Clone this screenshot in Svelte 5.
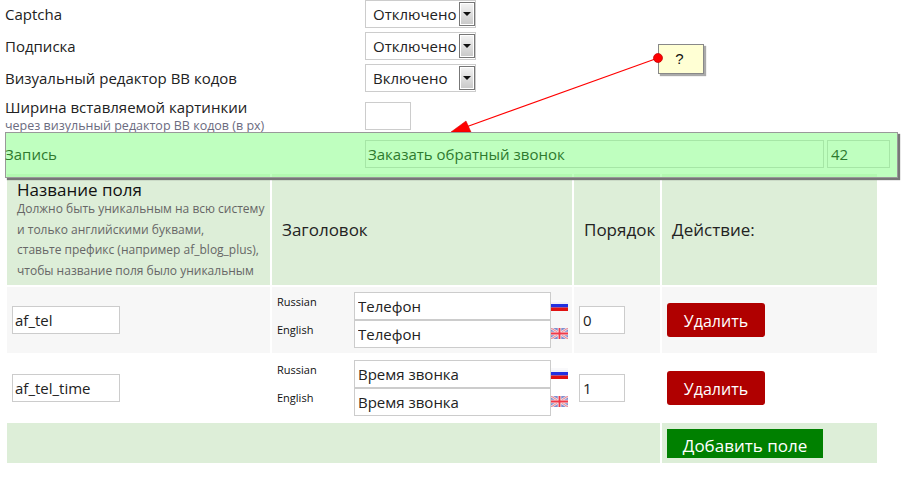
<script>
	const settings = [
		{ label: 'Captcha', value: 'Отключено' },
		{ label: 'Подписка', value: 'Отключено' },
		{ label: 'Визуальный редактор ВВ кодов', value: 'Включено' }
	];
	const fields = [
		{ name: 'af_tel', title: 'Телефон', order: 0 },
		{ name: 'af_tel_time', title: 'Время звонка', order: 1 }
	];
	const hints = [
		'Должно быть уникальным на всю систему',
		'и только английскими буквами,',
		'ставьте префикс (например af_blog_plus),',
		'чтобы название поля было уникальным'
	];
</script>

<div class="page">
	<!-- Settings -->
	<div class="settings">
		{#each settings as s}
			<div class="setting">
				<span class="setting-label">{s.label}</span>
				<div class="select-wrap">
					<select class="select"><option>{s.value}</option></select>
					<span class="select-btn"><i></i></span>
				</div>
			</div>
		{/each}
		<div class="setting setting-width">
			<div class="setting-label">
				<div>Ширина вставляемой картинкии</div>
				<small>через визульный редактор ВВ кодов (в px)</small>
			</div>
			<input class="input width-input" />
		</div>
	</div>

	<!-- Fields -->
	<table class="fields">
		<thead>
			<tr>
				<th class="col-name">
					<div class="name-title">Название поля</div>
					{#each hints as h}
						<div class="hint">{h}</div>
					{/each}
				</th>
				<th class="col-title">Заголовок</th>
				<th class="col-order">Порядок</th>
				<th class="col-action">Действие:</th>
			</tr>
		</thead>
		<tbody>
			{#each fields as f, i}
				<tr class:odd={i % 2 === 0}>
					<td class="cell-name"><input class="input name-input" value={f.name} /></td>
					<td class="cell-title">
						<div class="lang-row">
							<span class="lang">Russian</span>
							<input class="input title-input" value={f.title} />
							<svg class="flag" viewBox="0 0 17 11" width="17" height="11">
								<rect width="17" height="4" fill="#f0f0f6" />
								<rect y="4" width="17" height="3.5" fill="#2230e0" />
								<rect y="7.5" width="17" height="3.5" fill="#e01010" />
								<rect width="17" height="2" fill="#fff" opacity="0.6" />
							</svg>
						</div>
						<div class="lang-row">
							<span class="lang">English</span>
							<input class="input title-input" value={f.title} />
							<svg class="flag" viewBox="0 0 17 11" width="17" height="11">
								<rect width="17" height="11" fill="#7f8fd0" />
								<path d="M0 0L17 11M17 0L0 11" stroke="#f0dfe4" stroke-width="2.4" />
								<path d="M0 0L17 11M17 0L0 11" stroke="#ec6a78" stroke-width="0.8" />
								<path d="M8.5 0V11M0 5.5H17" stroke="#f4e8e8" stroke-width="3.6" />
								<path d="M8.5 0V11M0 5.5H17" stroke="#f03a4a" stroke-width="1.8" />
							</svg>
						</div>
					</td>
					<td class="cell-order"><input class="input order-input" value={f.order} /></td>
					<td class="cell-action"><button class="btn btn-delete">Удалить</button></td>
				</tr>
			{/each}
			<tr class="foot">
				<td colspan="3"></td>
				<td class="cell-add"><button class="btn btn-add">Добавить поле</button></td>
			</tr>
		</tbody>
	</table>

	<!-- Annotation -->
	<div class="note">?</div>
	<svg class="arrow" width="908" height="140" viewBox="0 0 908 140">
		<line x1="658" y1="58" x2="466" y2="127" stroke="#f00" stroke-width="1.1" />
		<path d="M451 132L466 121L471 132Z" fill="#f00" stroke="#c00" stroke-width="0.5" />
		<circle cx="658" cy="58" r="4.5" fill="#f00" stroke="#b00" stroke-width="0.7" />
	</svg>

	<!-- Floating record bar -->
	<div class="record-bar">
		<span class="record-label">Запись</span>
		<input class="record-input record-title" value="Заказать обратный звонок" />
		<input class="record-input record-id" value="42" />
	</div>
</div>

<style>
	:global(body) {
		margin: 0;
		background: #fff;
	}

	.page {
		position: relative;
		display: flow-root;
		width: 908px;
		height: 477px;
		overflow: hidden;
		font-family: 'Open Sans', sans-serif;
		font-size: 15px;
		color: #222;
	}

	.settings {
		display: flow-root;
		padding-left: 5px;
		height: 172px;
	}
	.setting {
		display: grid;
		grid-template-columns: 360px auto;
		align-items: center;
		height: 32px;
	}
	.setting:first-child {
		margin-top: -2px;
	}
	.setting-width {
		height: 38px;
		margin-top: 3px;
	}
	.setting-width .setting-label {
		align-self: start;
	}
	.setting-width .setting-label > div {
		line-height: 20px;
	}
	.setting-width small {
		display: block;
		margin-top: 2px;
		font-size: 12.5px;
		line-height: 14px;
		white-space: nowrap;
		color: #6b6b80;
	}

	.select-wrap {
		position: relative;
		width: 111px;
		height: 28px;
	}
	.select {
		appearance: none;
		width: 100%;
		height: 100%;
		box-sizing: border-box;
		padding: 0 0 0 7px;
		border: 1px solid #ccc;
		border-radius: 0;
		background: #fff;
		font: inherit;
		color: #222;
	}
	.select-btn {
		position: absolute;
		right: 1px;
		top: 2px;
		width: 16px;
		height: 24px;
		box-sizing: border-box;
		border: 1px solid #777;
		box-shadow: inset 0 0 0 1px #fff;
		background: linear-gradient(#f4f4f4, #c8c8c8);
		display: flex;
		align-items: center;
		justify-content: center;
	}
	.select-btn i {
		width: 0;
		height: 0;
		border-left: 4px solid transparent;
		border-right: 4px solid transparent;
		border-top: 4px solid #111;
	}

	.input {
		box-sizing: border-box;
		height: 28px;
		border: 1px solid #ccc;
		background: #fff;
		font: inherit;
		color: #222;
		padding: 0 2px;
		margin: 0;
	}
	.width-input {
		width: 46px;
	}

	.fields {
		width: 874px;
		margin-left: 5px;
		border-spacing: 2px;
		border-collapse: separate;
		table-layout: fixed;
	}
	th {
		box-sizing: border-box;
		height: 111px;
		padding: 0 0 0 10px;
		background: #ddeed8;
		font-size: 17px;
		font-weight: 400;
		text-align: left;
		color: #222;
	}
	.col-name {
		width: 263px;
		padding-top: 7px;
		vertical-align: top;
	}
	.col-title {
		width: 300px;
	}
	.col-order {
		width: 86px;
	}
	.name-title {
		line-height: 18px;
		color: #111;
	}
	.hint {
		font-size: 12px;
		line-height: 20.5px;
		color: #666;
		white-space: nowrap;
	}
	td {
		height: 66px;
		padding: 0;
	}
	tr.odd td {
		background: #f7f7f7;
	}
	.cell-name {
		padding-left: 5px;
	}
	.name-input {
		width: 108px;
	}
	.cell-title {
		padding-left: 5px;
	}
	.lang-row {
		display: flex;
		align-items: center;
		height: 28px;
	}
	.lang {
		width: 77px;
		font-size: 11px;
		margin-top: -10px;
		color: #111;
	}
	.title-input {
		width: 197px;
		padding-left: 3px;
	}
	.flag {
		margin-top: -2px;
	}
	.cell-order {
		padding-left: 5px;
	}
	.order-input {
		width: 46px;
		padding-left: 3px;
	}
	.cell-action {
		padding-left: 5px;
	}
	.btn {
		border: 0;
		padding: 0;
		font: inherit;
		font-size: 16px;
		color: #fff;
	}
	.btn-delete {
		width: 98px;
		height: 34px;
		padding-top: 2px;
		background: #b00000;
		border-radius: 3px;
	}
	.foot td {
		height: 40px;
		background: #ddeed8;
	}
	.foot .cell-add {
		box-sizing: border-box;
		padding: 6px 0 0 5px;
		vertical-align: top;
	}
	.btn-add {
		display: block;
		width: 156px;
		height: 29px;
		padding-top: 3px;
		font-size: 17px;
		background: #008000;
	}

	.record-bar {
		position: absolute;
		left: 5px;
		top: 132px;
		width: 893px;
		height: 46px;
		box-sizing: border-box;
		border: 1px solid #999;
		background: rgba(157, 255, 157, 0.65);
		box-shadow: 2px 2px 1px #777;
		display: flex;
		align-items: center;
		color: #2e7a2e;
	}
	.record-label {
		width: 360px;
		margin-left: -1px;
		margin-top: -2px;
	}
	.record-input {
		box-sizing: border-box;
		height: 28px;
		margin: -2px 0 0;
		border: 1px solid #a6e6a6;
		background: transparent;
		font: inherit;
		color: #2e7a2e;
		padding: 0 3px;
	}
	.record-title {
		width: 459px;
		margin-right: 3px;
		padding-left: 2px;
	}
	.record-id {
		width: 63px;
	}

	.arrow {
		position: absolute;
		left: 0;
		top: 0;
		pointer-events: none;
	}
	.note {
		position: absolute;
		left: 658px;
		top: 44px;
		width: 46px;
		height: 30px;
		padding-right: 3px;
		box-sizing: border-box;
		border: 1px solid #888;
		background: #ffffd4;
		box-shadow: 2px 2px 1px #aaa;
		font-family: 'Liberation Sans', sans-serif;
		font-size: 15px;
		text-align: center;
		line-height: 28px;
		color: #111;
	}
</style>
